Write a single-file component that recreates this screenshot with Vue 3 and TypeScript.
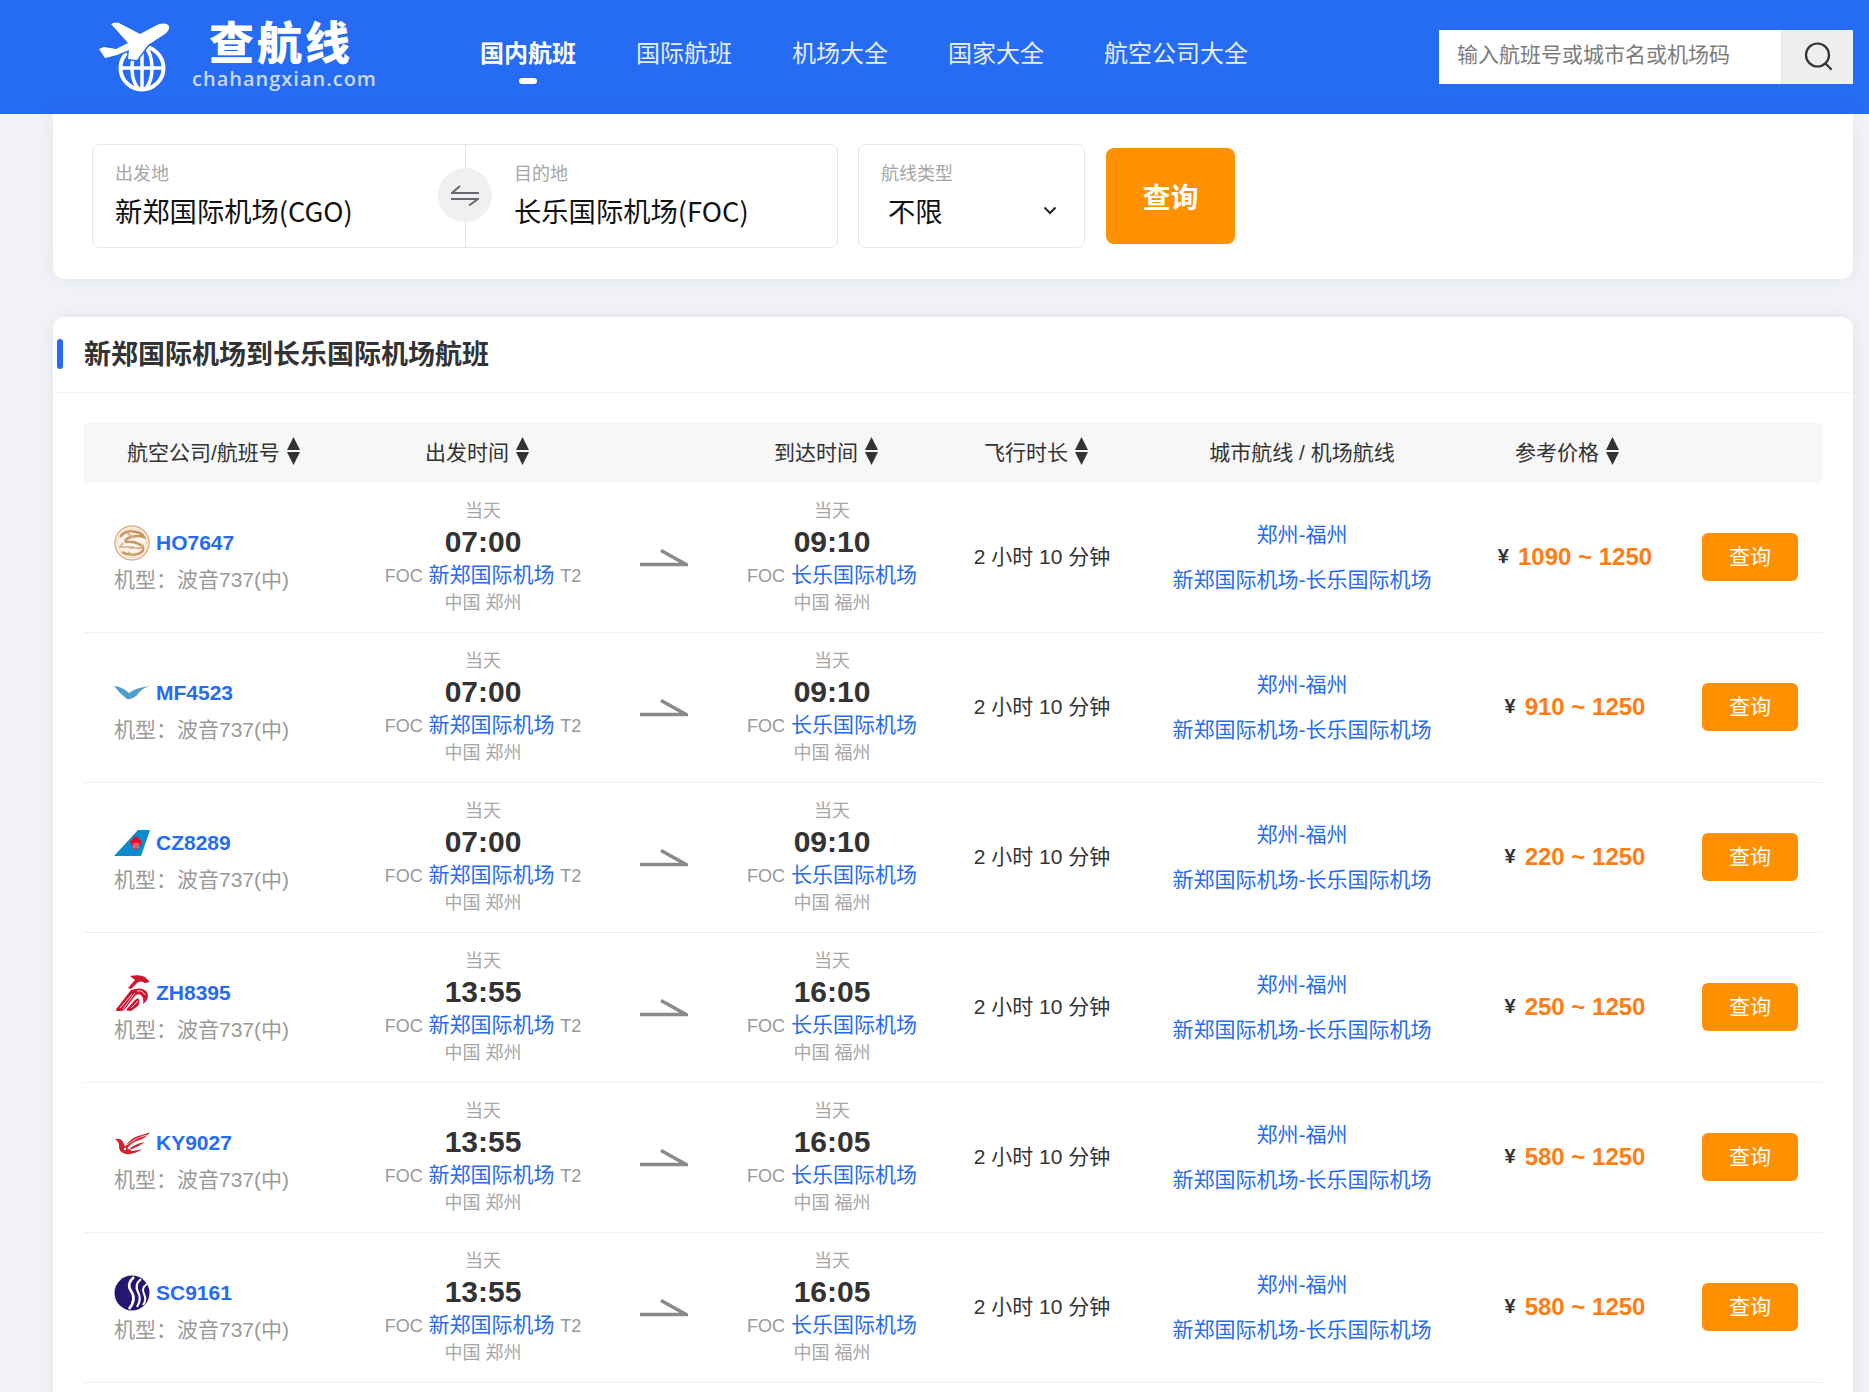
<script setup lang="ts">
interface Flight {
  logo: string
  no: string
  dep: string
  arr: string
  low: number
}

const navItems = ['国内航班', '国际航班', '机场大全', '国家大全', '航空公司大全']

const flights: Flight[] = [
  { logo: 'ho', no: 'HO7647', dep: '07:00', arr: '09:10', low: 1090 },
  { logo: 'mf', no: 'MF4523', dep: '07:00', arr: '09:10', low: 910 },
  { logo: 'cz', no: 'CZ8289', dep: '07:00', arr: '09:10', low: 220 },
  { logo: 'zh', no: 'ZH8395', dep: '13:55', arr: '16:05', low: 250 },
  { logo: 'ky', no: 'KY9027', dep: '13:55', arr: '16:05', low: 580 },
  { logo: 'sc', no: 'SC9161', dep: '13:55', arr: '16:05', low: 580 },
]

const columns = [
  { label: '航空公司/航班号', sort: true, cls: 'head-first' },
  { label: '出发时间', sort: true, cls: '' },
  { label: '', sort: false, cls: '' },
  { label: '到达时间', sort: true, cls: '' },
  { label: '飞行时长', sort: true, cls: '' },
  { label: '城市航线 / 机场航线', sort: false, cls: 'head-plain' },
  { label: '参考价格', sort: true, cls: 'head-price' },
  { label: '', sort: false, cls: '' },
]
</script>

<template>
  <div class="page">
    <header class="topbar">
      <a class="brand">
        <svg class="brand-mark" viewBox="0 0 72 70" width="72" height="70">
          <g fill="none" stroke="#fff" stroke-width="4">
            <circle cx="44" cy="46" r="21.5" />
            <ellipse cx="44" cy="46" rx="10" ry="21.5" stroke-width="3.5" />
            <path d="M22 46H66" stroke-width="3.5" />
            <path d="M44 24V68" stroke-width="3.5" />
          </g>
          <path
            d="M13 2Q16 0 20 .5L42 12 60 2.5Q68 0 71 4 72 8 67 12L50 23 39 38 30 37 31 28 19 33 7 36 1 27 6 25 18 27 30 21Z"
            fill="#fff"
            stroke="#266bf3"
            stroke-width="3"
            paint-order="stroke"
          />
        </svg>
        <span class="brand-text">
          <span class="brand-cn">查航线</span>
          <span class="brand-en">chahangxian.com</span>
        </span>
      </a>
      <nav class="nav">
        <a v-for="(item, i) in navItems" :key="item" class="nav-item" :class="{ active: i === 0 }">{{ item }}</a>
      </nav>
      <div class="search">
        <span class="search-input">输入航班号或城市名或机场码</span>
        <span class="search-btn">
          <svg viewBox="0 0 30 30" width="30" height="30" fill="none" stroke="#333" stroke-width="2.2">
            <circle cx="14.5" cy="14" r="11.5" />
            <path d="M22.5 22.5L28 28" stroke-linecap="round" />
          </svg>
        </span>
      </div>
    </header>

    <main class="content">
      <section class="card query-card">
        <div class="od-box">
          <div class="od-cell od-from">
            <span class="field-label">出发地</span>
            <span class="field-value">新郑国际机场(CGO)</span>
          </div>
          <div class="od-cell od-to">
            <span class="field-label">目的地</span>
            <span class="field-value">长乐国际机场(FOC)</span>
          </div>
          <span class="swap">
            <svg viewBox="0 0 28 21" width="28" height="21" fill="none" stroke="#666a70" stroke-width="2">
              <path d="M28 8H1L9 1" />
              <path d="M0 14H27L18 20.500" />
            </svg>
          </span>
        </div>
        <div class="type-box">
          <span class="field-label">航线类型</span>
          <div class="type-value">
            <span class="field-value">不限</span>
            <svg viewBox="0 0 14 9" width="14" height="9" fill="none" stroke="#222" stroke-width="2">
              <path d="M1.500 1.500L7 7 12.500 1.500" />
            </svg>
          </div>
        </div>
        <button class="query-btn">查询</button>
      </section>

      <section class="card list-card">
        <h2 class="list-title">新郑国际机场到长乐国际机场航班</h2>
        <div class="table">
          <div class="thead">
            <div v-for="(col, i) in columns" :key="i" class="th" :class="col.cls">
              <span>{{ col.label }}</span>
              <svg v-if="col.sort" class="sort" viewBox="0 0 12 28" width="13" height="28" fill="#333" preserveAspectRatio="none">
                <path d="M6 0L12 13H0Z" />
                <path d="M6 28L0 15H12Z" />
              </svg>
            </div>
          </div>

          <div v-for="f in flights" :key="f.no" class="tr">
            <div class="td-airline">
              <div class="flight-no">
                <svg class="logo" viewBox="0 0 36 36" width="36" height="36">
                  <g v-if="f.logo === 'ho'" fill="none">
                    <circle cx="18" cy="18" r="17" fill="#fbf3ea" stroke="#dcb389" stroke-width="1.500" />
                    <circle cx="18" cy="18" r="14.500" stroke="#e8cdb0" stroke-width=".8" />
                    <path d="M6 12Q12 4 22 7 28 8 30 12 24 10 17 12 10 14 12 17 20 16 27 20 32 25 26 28 17 32 8 27" stroke="#c8955f" stroke-width="2.400" />
                    <path d="M5 22H20M15 23H29M13 8L20 13M9 18L6 22M24 24L30 20M14 27L20 31" stroke="#d9ad82" stroke-width="1.600" />
                  </g>
                  <path
                    v-else-if="f.logo === 'mf'"
                    d="M0 11Q9 12 15 18 21 13 35 11 27 14 24 19 19 25 13 24 6 19 0 11Z"
                    fill="#4f9fc9"
                  />
                  <g v-else-if="f.logo === 'cz'">
                    <path d="M0 31L24 5H36L27 31Z" fill="#0a8ccd" />
                    <circle cx="22" cy="14.500" r="3" fill="#e60f27" />
                    <path d="M16 16Q22 12 28 16L26 21H24L23.500 25H20.500L20 21H18Z" fill="#e60f27" />
                    <path d="M20 18V23M22 18V24M24 18V23" stroke="#fff" stroke-width=".6" />
                  </g>
                  <g v-else-if="f.logo === 'zh'" fill="#cf1430">
                    <path d="M16 1Q26 -1 31 2L36 7 31 8Q27 5 23 8L17 14 14 13 21 5Z" />
                    <path d="M17 15Q28 11 33 17 36 24 29 29 30 23 27 20 24 18 21 21L11 34Q8 37 3 36 1 35 3 33Z" />
                    <path d="M24 23Q27 26 24 31L17 36Q13 36 12 35L21 25Z" />
                    <path d="M6 33L18 19M9 34L21 18M17 33L24 26M23 16Q29 15 31 20" fill="none" stroke="#fff" stroke-width=".8" />
                  </g>
                  <g v-else-if="f.logo === 'ky'" fill="#d2202f">
                    <path d="M1 14Q7 13 9 17 12 25 19 26L28 24Q20 30 12 29 4 27 5 20 5 17 1 14Z" />
                    <path d="M11 22Q15 14 24 11 32 9 36 7 33 12 26 15 17 17 13 24Z" />
                    <path d="M14 25Q20 19 31 17 24 22 18 24Z" />
                    <path d="M13 20Q19 14 33 10M14 23Q20 17 28 15" fill="none" stroke="#fff" stroke-width=".7" />
                    <circle cx="11" cy="24" r="1.200" fill="#fff" />
                  </g>
                  <g v-else fill="none">
                    <circle cx="18" cy="18" r="17.500" fill="#27166f" />
                    <path d="M20 2Q12 9 17 16 23 24 15 34" stroke="#fff" stroke-width="2.600" />
                    <path d="M27 4Q20 10 24 17 28 24 23 32" stroke="#fff" stroke-width="2.200" />
                    <path d="M33 9Q27 13 30 19 33 25 29 30" stroke="#fff" stroke-width="2" />
                  </g>
                </svg>
                <a class="link bold">{{ f.no }}</a>
              </div>
              <div class="plane-type">机型：波音737(中)</div>
            </div>

            <div class="td-time">
              <div class="muted day">当天</div>
              <div class="time">{{ f.dep }}</div>
              <div class="airport"><span class="code">FOC</span> <a class="link">新郑国际机场</a> <span class="code">T2</span></div>
              <div class="muted">中国 郑州</div>
            </div>

            <div class="td-arrow">
              <svg viewBox="0 0 48 18" width="48" height="18" fill="none" stroke="#8a8a8a" stroke-width="3.500">
                <path d="M0 15.500H46L21 1.500" />
              </svg>
            </div>

            <div class="td-time">
              <div class="muted day">当天</div>
              <div class="time">{{ f.arr }}</div>
              <div class="airport"><span class="code">FOC</span> <a class="link">长乐国际机场</a></div>
              <div class="muted">中国 福州</div>
            </div>

            <div class="td-duration">2 小时 10 分钟</div>

            <div class="td-route">
              <a class="link">郑州-福州</a>
              <a class="link">新郑国际机场-长乐国际机场</a>
            </div>

            <div class="td-price">
              <span class="yen">¥</span>
              <span class="price">{{ f.low }} ~ 1250</span>
            </div>

            <div class="td-action">
              <button class="row-btn">查询</button>
            </div>
          </div>
        </div>
      </section>
    </main>
  </div>
</template>

<style>
html,
body {
  margin: 0;
  background: #f1f3f7;
}
</style>

<style scoped>
.page {
  height: 1392px;
  overflow: hidden;
  font-family: "Liberation Sans", "Noto Sans CJK SC", sans-serif;
  color: #333;
}

a {
  text-decoration: none;
}

/* 顶部导航 */
.topbar {
  height: 114px;
  background: #266bf3;
  display: flex;
  align-items: center;
  padding: 0 16px 0 98px;
}

.brand {
  display: flex;
  align-items: center;
  width: 382px;
  height: 114px;
}

.brand-mark {
  margin-top: -1px;
  flex: none;
}

.brand-text {
  display: flex;
  flex-direction: column;
  margin: 0 0 4px 22px;
}

.brand-cn {
  font-family: "Noto Sans CJK SC", sans-serif;
  font-weight: 900;
  font-size: 45px;
  line-height: 44px;
  letter-spacing: 3px;
  color: #fff;
  margin-left: 17px;
}

.brand-en {
  margin-top: 4px;
  font-family: "Open Sans", sans-serif;
  font-weight: 600;
  font-size: 20px;
  line-height: 24px;
  letter-spacing: 1px;
  color: #c9d9fa;
}

.nav {
  display: flex;
  gap: 60px;
  margin-bottom: 10px;
}

.nav-item {
  position: relative;
  font-family: "Noto Sans CJK SC", sans-serif;
  font-size: 24px;
  line-height: 34px;
  color: #e6eefe;
}

.nav-item.active {
  color: #fff;
  font-weight: 700;
}

.nav-item.active::after {
  content: "";
  position: absolute;
  left: 50%;
  bottom: -15px;
  width: 18px;
  height: 6px;
  margin-left: -9px;
  border-radius: 3px;
  background: #fff;
}

.search {
  margin-left: auto;
  display: flex;
  width: 414px;
  height: 54px;
  background: #fff;
}

.search-input {
  flex: 1;
  padding-left: 18px;
  font-size: 21px;
  line-height: 50px;
  color: #7b7b7b;
}

.search-btn {
  width: 72px;
  padding-bottom: 2px;
  background: #eee;
  border-left: 1px solid #e2e2e2;
  display: flex;
  align-items: center;
  justify-content: center;
  box-sizing: border-box;
}

/* 卡片 */
.content {
  padding: 0 16px 0 53px;
}

.card {
  background: #fff;
  box-shadow: 0 0 20px rgba(30, 50, 90, 0.08);
}

.query-card {
  display: flex;
  align-items: center;
  height: 165px;
  box-sizing: border-box;
  padding: 0 39px 1px;
  border-radius: 0 0 12px 12px;
}

.od-box {
  position: relative;
  display: flex;
  width: 746px;
  height: 104px;
  box-sizing: border-box;
  border: 1px solid #e6e6e6;
  border-radius: 8px;
}

.od-cell {
  display: flex;
  flex-direction: column;
}

.od-from {
  width: 373px;
  padding-left: 22px;
  box-sizing: border-box;
  border-right: 1px solid #e6e6e6;
}

.od-to {
  flex: 1;
  padding-left: 48px;
}

.field-label {
  margin-top: 12px;
  font-family: "Noto Sans CJK SC", sans-serif;
  font-size: 18px;
  line-height: 30px;
  color: #a6a6a6;
}

.field-value {
  font-family: "Noto Sans CJK SC", sans-serif;
  font-size: 27.300px;
  line-height: 46px;
  color: #111;
}

.swap {
  position: absolute;
  left: 345px;
  top: 23px;
  width: 54px;
  height: 54px;
  border-radius: 50%;
  background: #f0f0f0;
  display: flex;
  align-items: center;
  justify-content: center;
}

.type-box {
  display: flex;
  flex-direction: column;
  width: 227px;
  height: 104px;
  box-sizing: border-box;
  margin-left: 20px;
  padding: 0 27px 0 22px;
  border: 1px solid #e6e6e6;
  border-radius: 8px;
}

.type-value {
  display: flex;
  align-items: center;
  justify-content: space-between;
  padding-left: 7px;
}

.query-btn {
  width: 129px;
  height: 96px;
  margin-left: 21px;
  border: none;
  border-radius: 8px;
  background: #ff9000;
  color: #fff;
  font-family: "Noto Sans CJK SC", sans-serif;
  font-size: 28px;
  font-weight: 700;
}

.list-card {
  margin-top: 38px;
  height: 1100px;
  border-radius: 12px;
}

.list-title {
  position: relative;
  margin: 0;
  height: 76px;
  box-sizing: border-box;
  border-bottom: 1px solid #f3f3f3;
  padding-left: 31px;
  font-family: "Noto Sans CJK SC", sans-serif;
  font-size: 27px;
  font-weight: 700;
  line-height: 72px;
  color: #333;
}

.list-title::before {
  content: "";
  position: absolute;
  left: 4px;
  top: 22px;
  width: 6px;
  height: 30px;
  border-radius: 3px;
  background: #266bf3;
}

/* 表格 */
.table {
  margin: 30px 31px 0;
}

.thead,
.tr {
  display: grid;
  grid-template-columns: 270px 258px 104px 232px 188px 332px 214px 140px;
}

.thead {
  height: 60px;
  background: #f7f7f7;
}

.th {
  display: flex;
  align-items: center;
  justify-content: center;
  padding: 0 12px 4px 0;
  font-size: 21px;
  color: #333;
}

.head-first {
  justify-content: flex-start;
  padding: 0 0 4px 43px;
}

.head-plain {
  padding-right: 0;
}

.head-price {
  padding-right: 16px;
}

.sort {
  margin-left: 7px;
}

.tr {
  height: 150px;
  box-sizing: border-box;
  border-bottom: 1px solid #f0f0f0;
  align-items: center;
}

.link {
  color: #266bf3;
}

.bold {
  font-weight: 700;
}

.td-airline {
  padding-left: 30px;
  margin-top: 8px;
}

.flight-no {
  display: flex;
  align-items: center;
  gap: 6px;
  font-size: 21px;
  height: 36px;
}

.plane-type {
  margin-top: 1px;
  font-size: 21px;
  line-height: 36px;
  color: #999;
}

.td-time {
  text-align: center;
  padding-bottom: 1px;
}

.muted {
  font-size: 18px;
  line-height: 26px;
  color: #a6a6a6;
}

.day {
  line-height: 24px;
}

.time {
  font-size: 30px;
  font-weight: 700;
  line-height: 38px;
  color: #333;
}

.airport {
  font-size: 21px;
  line-height: 28px;
}

.code {
  font-size: 18px;
  color: #999;
}

.td-arrow {
  display: flex;
  justify-content: center;
}

.td-duration {
  text-align: center;
  font-size: 21px;
  color: #333;
  padding-bottom: 6px;
}

.td-route {
  display: flex;
  flex-direction: column;
  align-items: center;
  gap: 15px;
  font-size: 21px;
  line-height: 30px;
}

.td-price {
  display: flex;
  align-items: center;
  justify-content: center;
  gap: 9px;
  padding-bottom: 2px;
}

.yen {
  font-size: 20px;
  font-weight: 700;
  color: #333;
}

.price {
  font-size: 24px;
  font-weight: 700;
  color: #ff7d13;
}

.td-action {
  display: flex;
  justify-content: flex-end;
  padding: 0 24px 2px 0;
}

.row-btn {
  width: 96px;
  height: 48px;
  padding-bottom: 4px;
  border: none;
  border-radius: 6px;
  background: #ff9000;
  color: #fff;
  font-family: "Noto Sans CJK SC", sans-serif;
  font-size: 21px;
}
</style>
